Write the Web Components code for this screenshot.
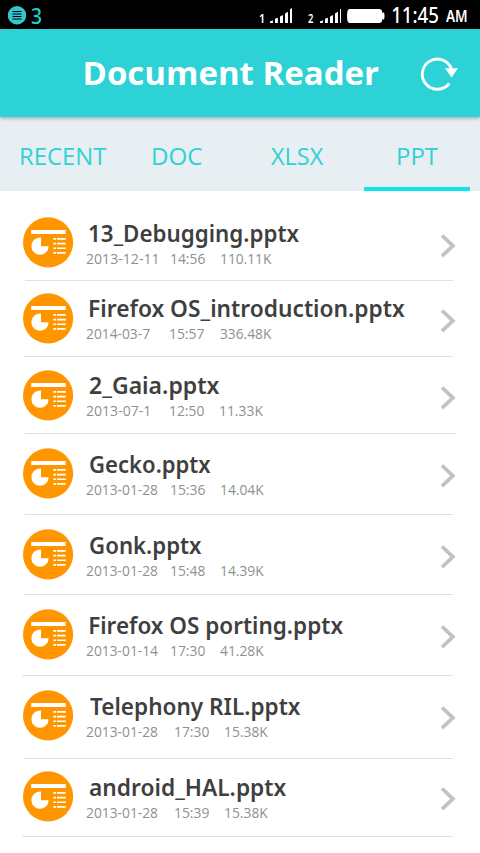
<!DOCTYPE html>
<html lang="en">
<head>
<meta charset="utf-8">
<title>Document Reader</title>
<style>
body{margin:0;width:480px;height:853px;overflow:hidden;background:#fff;font-family:"Open Sans","Noto Sans",sans-serif}
</style>
</head>
<body>
<reader-app></reader-app>
<script>
const ctx = document.createElement('canvas').getContext('2d');

class BaseEl extends HTMLElement {
  render(html) { this.attachShadow({ mode: 'open' }).innerHTML = html; }
}

/* One line of text whose visible ink spans exactly `w` pixels. */
class FitText extends BaseEl {
  connectedCallback() {
    this.render(`<style>
      :host{display:block;flex:none;white-space:nowrap;height:0;line-height:0}
      span{display:inline-block;transform-origin:0 0;white-space:pre}
    </style><span><slot></slot></span>`);
    const w = parseFloat(this.getAttribute('w'));
    const cs = getComputedStyle(this);
    ctx.font = `${cs.fontWeight} ${cs.fontSize} ${cs.fontFamily}`;
    const m = ctx.measureText(this.textContent);
    const s = w / (m.actualBoundingBoxRight + m.actualBoundingBoxLeft);
    this.style.width = w + 'px';
    this.shadowRoot.querySelector('span').style.transform =
      `translateX(${m.actualBoundingBoxLeft * s}px) scaleX(${s})`;
  }
}

class StatusBar extends BaseEl {
  connectedCallback() {
    const bars = '<path d="M0 15h2.900v-2.800L0 13.400zM5 15h2.900v-5.300L5 10.800zM10 15h3V7L10 8.400zM15 15h3V3.800L15 5.400zM20 15h2.200V0L20 1.200z"/>';
    this.render(`<style>
      :host{display:flex;height:29px;background:#000;color:#fff;box-sizing:border-box;padding-left:8px;font-family:"Noto Sans",sans-serif}
      svg{display:block;flex:none;fill:#fff}
      .badge{margin-top:6px}
      .three{color:#1fd0d0;font-size:22px;font-weight:500;margin:14.500px 0 0 5px}
      .sim{font-size:12px;font-weight:600;margin-top:18.500px}
      .time{font-size:22px;font-weight:500;margin:14px 0 0 7px}
      .am{font-size:15.500px;font-weight:600;margin:16px 0 0 7.500px}
    </style>
    <svg class="badge" width="18" height="19"><circle cx="9" cy="9.300" r="9.200" fill="#35c4d0"/><path d="M4.500 5.500h9M4.500 8h9M4.500 10.500h9M4.500 13h9" stroke="#000" stroke-width="1.200"/></svg>
    <fit-text class="three" w="10.500">3</fit-text>
    <fit-text class="sim" w="4.500" style="margin-left:217.500px">1</fit-text>
    <svg style="margin:8px 0 0 6.500px" width="22" height="15">${bars}</svg>
    <fit-text class="sim" w="5.500" style="margin-left:16px">2</fit-text>
    <svg style="margin:8px 0 0 6.500px" width="21" height="15">${bars}</svg>
    <svg style="margin:8px 0 0 6px" width="38" height="16"><path d="M2 1h31l2 1.500V4.500h1.500q1 0 1 3.500t-1 3.500h-1.500v2L33 15H2Q0 14 0 8T2 1z"/></svg>
    <fit-text class="time" w="46.500">11:45</fit-text>
    <fit-text class="am" w="20.500">AM</fit-text>`);
  }
}

class AppHeader extends BaseEl {
  connectedCallback() {
    this.render(`<style>
      :host{display:flex;height:88px;background:#2cd2d5;color:#fff;position:relative;z-index:1;box-shadow:0 1px 4px rgba(0,0,0,.35);padding-left:82.500px;box-sizing:border-box}
      fit-text{font-size:33px;font-weight:700;margin-top:44px}
      svg{margin:27.300px 0 0 42.700px}
    </style>
    <fit-text w="294.500"><slot></slot></fit-text>
    <svg width="40" height="36" fill="none"><path d="M31.400 12.500A15.100 15.100 0 1 0 29.300 27.500" stroke="#fff" stroke-width="2.900"/><path d="M25 12.300h13L31.500 21.500z" fill="#fff"/></svg>`);
  }
}

class TabBar extends BaseEl {
  connectedCallback() {
    this.render(`<style>:host{display:flex;height:74px;background:#e7eff3}</style><slot></slot>`);
  }
}

class TabItem extends BaseEl {
  connectedCallback() {
    this.render(`<style>
      :host{display:flex;flex:none;box-sizing:border-box;height:74px;color:#2fd1d5;font-size:24.500px;padding-top:39px}
      :host([active]){border-bottom:4px solid #0ae9ea}
    </style><slot></slot>`);
  }
}

class PptIcon extends BaseEl {
  connectedCallback() {
    this.render(`<style>:host{display:block;width:51px;height:51px}svg{display:block}</style>
    <svg width="51" height="51"><circle cx="25.100" cy="25.400" r="25.100" fill="#ff9600"/>
    <g fill="#fff"><path d="M8.200 13H42.800v4H8.200z"/><path d="M17 20.600A8.600 8.600 0 1 0 25.600 29.200H18V20.600z"/>
    <path d="M30.300 21h2.800v1.700h-2.800zM34 21H42.800v1.700H34zM30.300 25.700h2.800v1.700h-2.800zM34 25.700H42.800v1.700H34zM30.300 30.400h2.800v1.700h-2.800zM34 30.400H42.800v1.700H34zM30.300 35h2.800v1.700h-2.800zM34 35H42.800v1.700H34z"/></g></svg>`);
  }
}

class FileRow extends BaseEl {
  connectedCallback() {
    const d = JSON.parse(this.getAttribute('data'));
    const [name, nx, nw, date, dw, time, tx, size, sx, sw, h, base, lift, l, r, chevron = 0, dx = 0] = d;
    this.render(`<style>
      :host{display:grid;grid-template-columns:63px 353.700px 1fr;box-sizing:border-box;height:${h}px;padding:${base - lift}px 0 0 23px;
        background:linear-gradient(#e1e1e1,#e1e1e1) ${l}px 100%/${r - l}px 1px no-repeat}
      .name{font-family:"Noto Sans",sans-serif;font-size:24px;font-weight:600;color:#3f3f3f;margin:${lift - 9}px 0 0 ${nx - 85.8}px}
      .meta{display:flex;font-size:14px;color:#8b928f;margin-top:26px;font-weight:400}
      svg{display:block;margin:${lift - 9 - chevron}px 0 0 ${dx}px}
    </style>
    <ppt-icon></ppt-icon>
    <div><fit-text class="name" w="${nw}">${name}</fit-text>
      <div class="meta"><fit-text w="${dw}">${date}</fit-text>
      <fit-text w="34.300" style="margin-left:${tx - 86.2 - dw}px">${time}</fit-text>
      <fit-text w="${sw}" style="margin-left:${sx - tx - 34.3}px">${size}</fit-text></div></div>
    <svg width="16" height="26" fill="none"><path d="M2 2.500 12.900 12.800 2 23.200" stroke="#c2c2c2" stroke-width="3.700"/></svg>`);
  }
}

class ReaderApp extends BaseEl {
  connectedCallback() {
    const rows = [
      ['13_Debugging.pptx', 89, 210.5, '2013-12-11', 70.5, '14:56', 171.2, '110.11K', 221.7, 50.8, 90, 51, 25, 25, 453],
      ['Firefox OS_introduction.pptx', 89.3, 315.3, '2014-03-7', 64, '15:57', 170.5, '336.48K', 220, 51.8, 76, 36, 24, 24, 453],
      ['2_Gaia.pptx', 89.5, 130, '2013-07-1', 62.3, '12:50', 170.5, '11.33K', 220.7, 43.3, 77, 37, 24, 25, 456, 0, 0.7],
      ['Gecko.pptx', 89.8, 121.2, '2013-01-28', 72, '15:36', 171.2, '14.04K', 221.7, 43, 81, 39, 25, 25, 453, 1],
      ['Gonk.pptx', 89.5, 112, '2013-01-28', 72, '15:48', 171.2, '14.39K', 221.7, 43, 80, 39, 25, 24, 453, 1],
      ['Firefox OS porting.pptx', 89.3, 253.5, '2013-01-14', 72, '17:30', 171.2, '41.28K', 220.5, 44, 81, 39, 25, 22, 453, 1],
      ['Telephony RIL.pptx', 89.7, 211, '2013-01-28', 72, '17:30', 174.8, '15.38K', 225.2, 43.2, 83, 39, 25, 24, 453, 1],
      ['android_HAL.pptx', 89.8, 196.8, '2013-01-28', 72, '15:39', 174.8, '15.38K', 225.2, 43.2, 78, 37, 25, 22, 453, 1]
    ];
    this.render(`<style>:host{display:flex;flex-direction:column;width:480px;height:853px;background:#fff}
      tab-item:nth-child(1){padding-left:21px;width:152px}
      tab-item:nth-child(2){padding-left:1px;width:119px}
      tab-item:nth-child(3){width:93px}
      tab-item:nth-child(4){padding-left:34px;width:106px}
    </style>
    <status-bar></status-bar>
    <app-header>Document Reader</app-header>
    <tab-bar>
      <tab-item><fit-text w="86">RECENT</fit-text></tab-item>
      <tab-item><fit-text w="49">DOC</fit-text></tab-item>
      <tab-item><fit-text w="53">XLSX</fit-text></tab-item>
      <tab-item active><fit-text w="40.500">PPT</fit-text></tab-item>
    </tab-bar>
    ${rows.map(r => `<file-row data='${JSON.stringify(r)}'></file-row>`).join('')}`);
  }
}

customElements.define('fit-text', FitText);
customElements.define('status-bar', StatusBar);
customElements.define('app-header', AppHeader);
customElements.define('tab-bar', TabBar);
customElements.define('tab-item', TabItem);
customElements.define('ppt-icon', PptIcon);
customElements.define('file-row', FileRow);
customElements.define('reader-app', ReaderApp);
</script>
</body>
</html>
